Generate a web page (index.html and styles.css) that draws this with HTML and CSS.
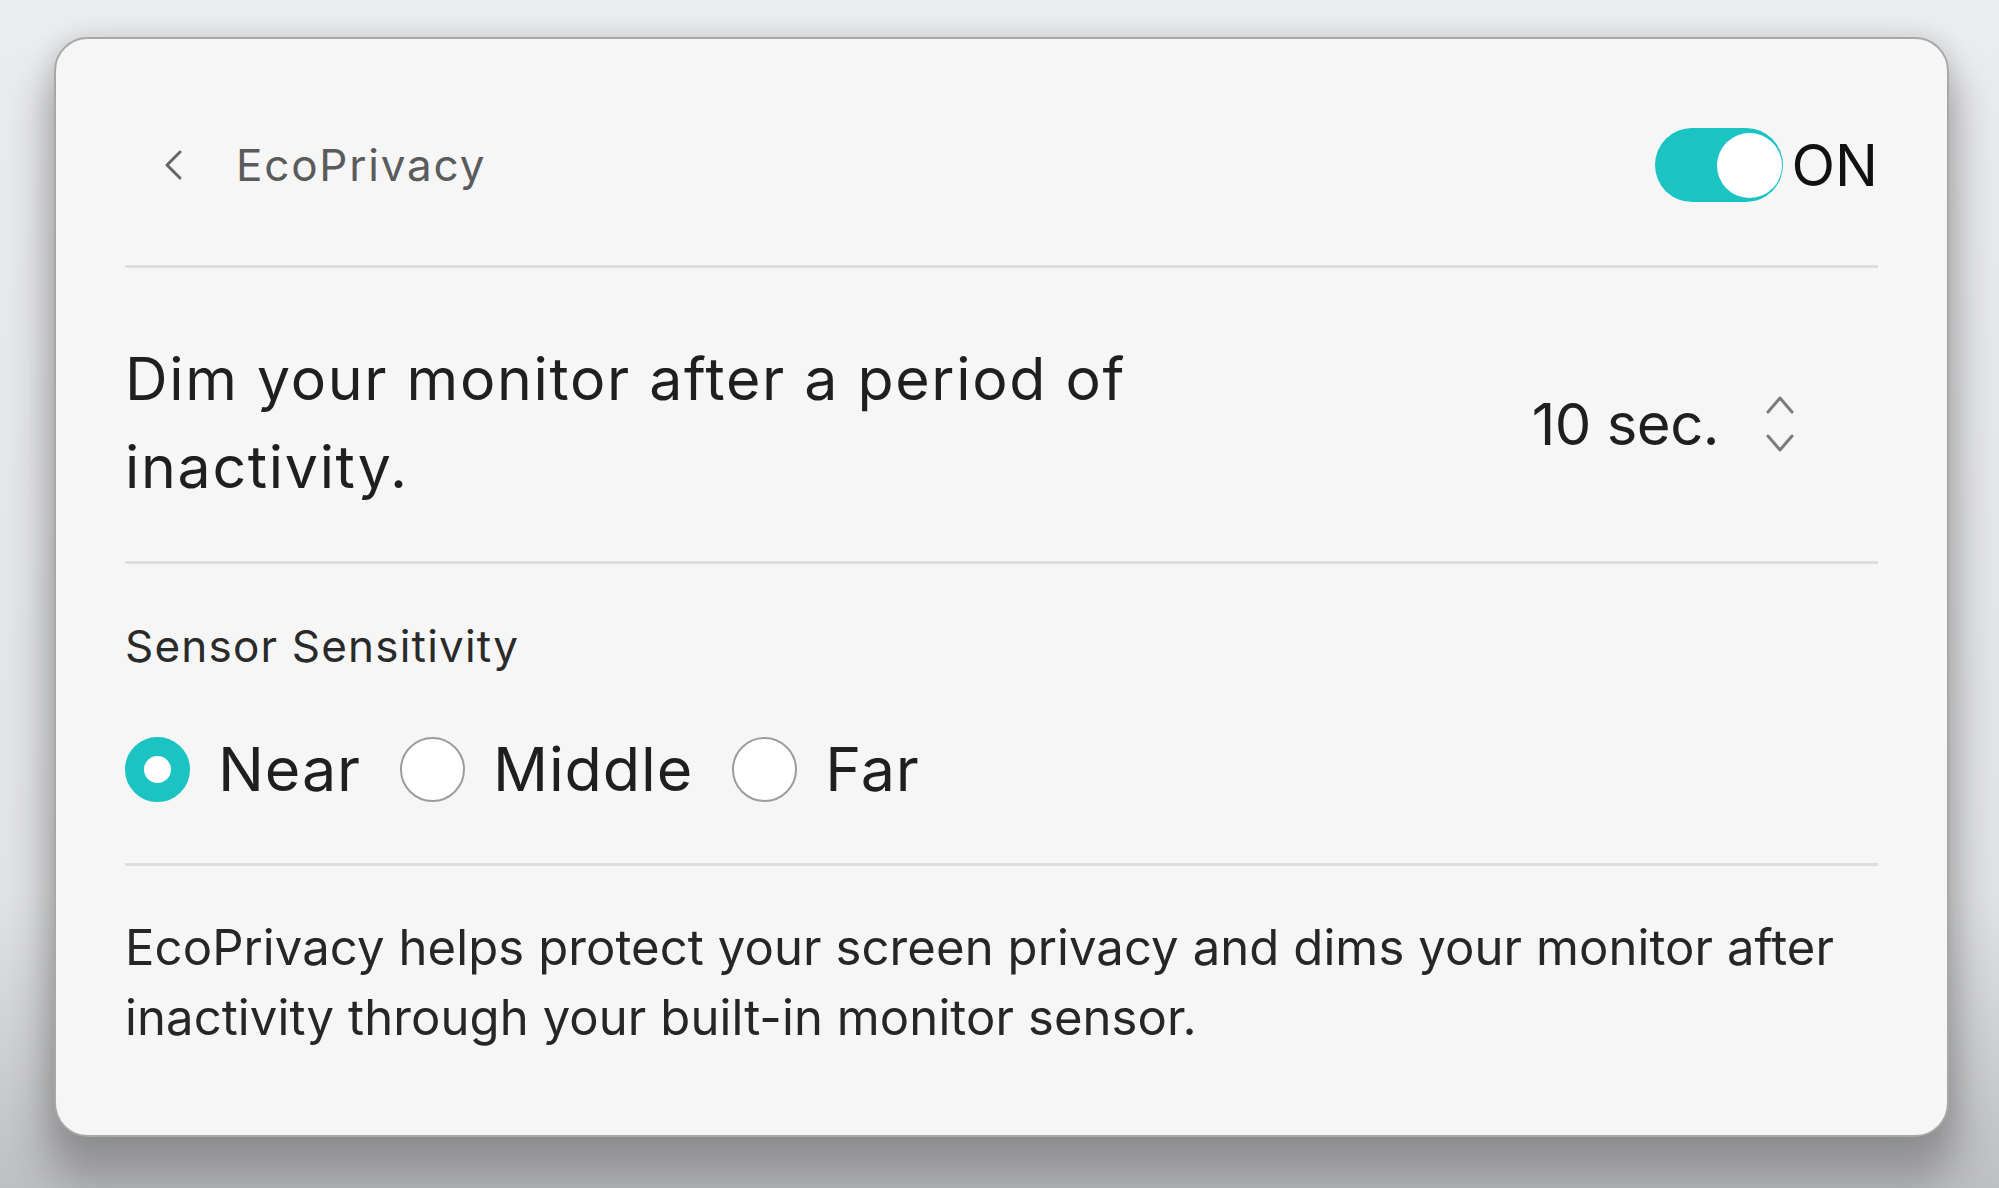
FILE: index.html
```html
<!DOCTYPE html>
<html lang="en">
<head>
<meta charset="utf-8">
<title>EcoPrivacy</title>
<link rel="stylesheet" href="styles.css">
</head>
<body>
<div class="card">
  <header class="header">
    <div class="title-group">
      <svg class="back" width="20" height="32" viewBox="0 0 20 32"><path d="M17 3 L4 16 L17 29" fill="none" stroke="#676767" stroke-width="3" stroke-linecap="round" stroke-linejoin="round"/></svg>
      <span class="title">EcoPrivacy</span>
    </div>
    <div class="switch-group">
      <div class="switch"><div class="knob"></div></div>
      <span class="switch-label">ON</span>
    </div>
  </header>

  <section class="row dim-row">
    <p class="dim-text">Dim your monitor after a period of inactivity.</p>
    <div class="stepper">
      <span class="stepper-value">10 sec.</span>
      <svg class="stepper-arrows" width="30" height="58" viewBox="0 0 30 58"><path d="M3 17 L15 3 L27 17" fill="none" stroke="#7b7b7b" stroke-width="3" stroke-linecap="round" stroke-linejoin="round"/><path d="M3 41 L15 55 L27 41" fill="none" stroke="#7b7b7b" stroke-width="3" stroke-linecap="round" stroke-linejoin="round"/></svg>
    </div>
  </section>

  <section class="row sensor-row">
    <div class="sensor-label">Sensor Sensitivity</div>
    <div class="radios">
      <label class="radio"><span class="dot dot-on"></span><span class="radio-text">Near</span></label>
      <label class="radio"><span class="dot"></span><span class="radio-text">Middle</span></label>
      <label class="radio"><span class="dot"></span><span class="radio-text">Far</span></label>
    </div>
  </section>

  <section class="desc-row">
    <p class="desc">EcoPrivacy helps protect your screen privacy and dims your monitor after inactivity through your built-in monitor sensor.</p>
  </section>
</div>
</body>
</html>
```

FILE: styles.css
```css
html, body {
  margin: 0;
  height: 100%;
}
body {
  background: linear-gradient(180deg, #ebecee 0%, #e2e3e5 75%, #bebfc1 100%);
  padding: 37px 0 0 54px;
  box-sizing: border-box;
  font-family: "Inter", "Liberation Sans", sans-serif;
  color: #222;
  overflow: hidden;
}
.card {
  width: 1895px;
  height: 1100px;
  box-sizing: border-box;
  background: #f6f6f6;
  border: 2px solid #a8a8a8;
  border-radius: 34px;
  padding: 0 69px;
  box-shadow: 0 36px 40px 10px rgba(0, 0, 0, 0.24), 0 0 26px rgba(0, 0, 0, 0.12);
}
.header {
  display: flex;
  align-items: center;
  justify-content: space-between;
  padding: 89px 0 63px 38px;
  border-bottom: 3px solid #dedede;
}
.title-group {
  display: flex;
  align-items: center;
  gap: 53px;
}
.back {
  display: block;
}
.title {
  font-size: 44px;
  color: #5b5b5b;
  line-height: 1;
  letter-spacing: 1.8px;
}
.switch-group {
  display: flex;
  align-items: center;
  gap: 8px;
}
.switch {
  width: 128px;
  height: 74px;
  border-radius: 37px;
  background: #1cc3c3;
  display: flex;
  align-items: center;
  justify-content: flex-end;
  padding: 0 1px 0 0;
  box-sizing: border-box;
}
.knob {
  width: 65px;
  height: 65px;
  border-radius: 50%;
  background: #fff;
}
.switch-label {
  font-size: 57px;
  line-height: 1;
  color: #111;
  letter-spacing: 0;
}
.row {
  border-bottom: 3px solid #dedede;
}
.dim-row {
  display: flex;
  align-items: center;
  justify-content: space-between;
  padding: 67px 0 50px 0;
}
.dim-text {
  margin: 0;
  max-width: 1120px;
  font-size: 59px;
  line-height: 88px;
  color: #1f1f1f;
  letter-spacing: 1.7px;
}
.stepper {
  display: flex;
  align-items: center;
  gap: 46px;
  margin-right: 83px;
  margin-top: 2px;
}
.stepper-value {
  font-size: 58px;
  line-height: 1;
  color: #1f1f1f;
  letter-spacing: -0.5px;
}
.stepper-arrows {
  display: block;
}
.sensor-row {
  padding: 57px 0 61px 0;
  display: flex;
  flex-direction: column;
  gap: 66px;
}
.sensor-label {
  font-size: 44px;
  line-height: 50px;
  color: #2a2a2a;
  letter-spacing: 1.2px;
}
.radios {
  display: flex;
  align-items: center;
  gap: 39px;
}
.radio {
  display: flex;
  align-items: center;
  gap: 28px;
}
.dot {
  width: 65px;
  height: 65px;
  box-sizing: border-box;
  border-radius: 50%;
  border: 2px solid #9c9c9c;
  background: #fff;
  flex: none;
}
.dot-on {
  border: 19px solid #1cc3c3;
  background: #fff;
}
.radio-text {
  font-size: 61px;
  line-height: 65px;
  color: #1f1f1f;
  letter-spacing: 0.9px;
}
.desc-row {
  padding: 47px 0 0 0;
}
.desc {
  margin: 0;
  font-size: 49px;
  line-height: 70px;
  color: #262626;
  letter-spacing: 0.1px;
}
```
